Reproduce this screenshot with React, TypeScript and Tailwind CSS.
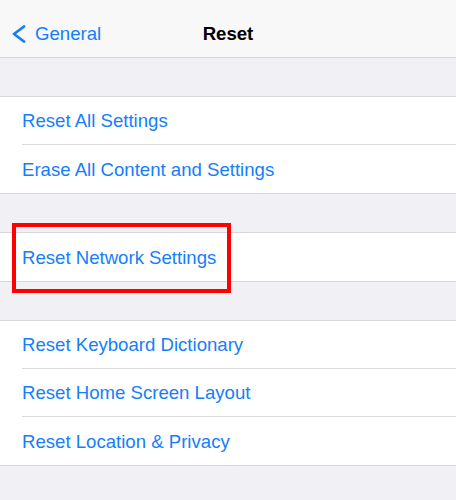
const groups: string[][] = [
  ['Reset All Settings', 'Erase All Content and Settings'],
  ['Reset Network Settings'],
  ['Reset Keyboard Dictionary', 'Reset Home Screen Layout', 'Reset Location & Privacy'],
];

function Row({ label, last }: { label: string; last: boolean }) {
  return (
    <div className="h-12 bg-white pl-[22px]">
      <div
        className={`flex h-full items-center pt-[1px] text-[18.6px] text-[#147efb] ${
          last ? '' : 'border-b border-[#dcdce0]'
        }`}
      >
        {label}
      </div>
    </div>
  );
}

export default function App() {
  return (
    <div
      className="min-h-[500px] w-[456px] bg-[#f0f0f5]"
      style={{ fontFamily: '"Liberation Sans", Arial, sans-serif' }}
    >
      {/* Nav bar */}
      <div className="relative flex h-[58px] items-center justify-center border-b border-[#d6d6da] bg-[#f8f8f8] pt-[10px]">
        <div className="absolute left-[12px] top-[25px] flex items-center">
          <svg width="14" height="18" viewBox="0 0 14 18" fill="none">
            <polyline
              points="12,1.5 2,9 12,16.5"
              stroke="#147efb"
              strokeWidth="2.8"
              strokeLinecap="round"
              strokeLinejoin="round"
            />
          </svg>
          <span className="ml-[9px] text-[18.6px] leading-none text-[#147efb]">General</span>
        </div>
        <span className="text-[18.6px] font-bold text-black">Reset</span>
      </div>

      {/* Groups */}
      <div className="pt-[38px]">
        {groups.map((g, gi) => (
          <div key={gi} className={gi === 0 ? '' : 'mt-[38px]'}>
            <div className="relative border-y border-[#d6d6da]">
              {g.map((label, i) => (
                <Row key={label} label={label} last={i === g.length - 1} />
              ))}
              {gi === 1 && (
                <div className="absolute left-[12px] top-[-10px] h-[70px] w-[219px] border-4 border-[#ff0000]" />
              )}
            </div>
          </div>
        ))}
      </div>
    </div>
  );
}
